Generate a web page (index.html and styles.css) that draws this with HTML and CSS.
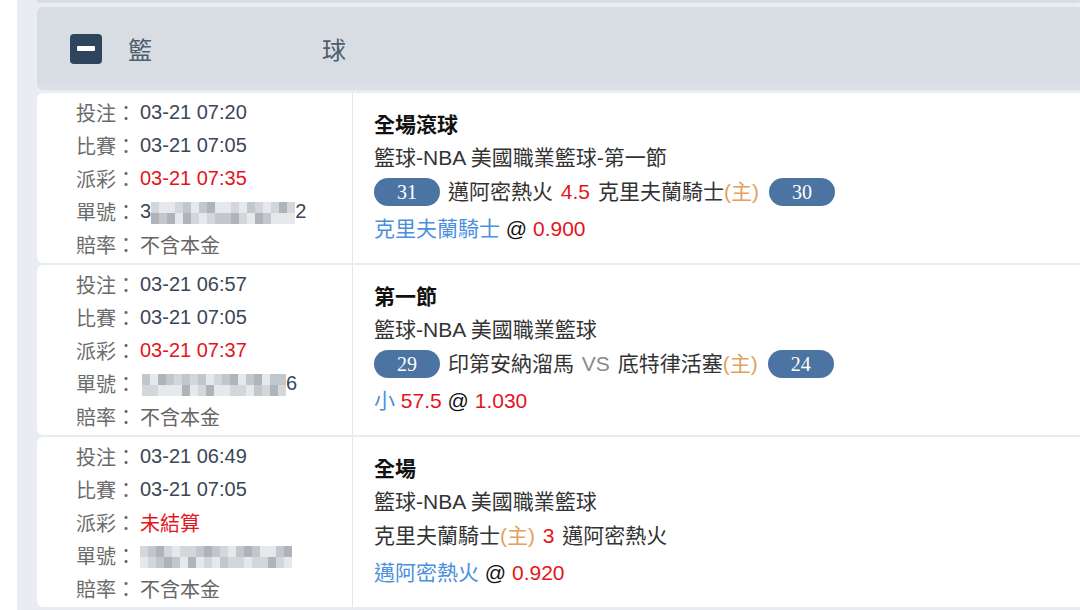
FILE: index.html
```html
<!DOCTYPE html>
<html lang="zh-Hant">
<head>
  <meta charset="UTF-8">
  <title>注單記錄</title>
  <link rel="stylesheet" href="styles.css">
</head>
<body>
  <div class="wrap">
    <div class="prev-bar"></div>

    <div class="sport-head">
      <span class="toggle"><span class="minus"></span></span>
      <span class="sport-name"><span>籃</span><span>球</span></span>
    </div>

    <div class="bet">
      <div class="meta">
        <div><span class="lbl">投注：</span><span class="val">03-21 07:20</span></div>
        <div><span class="lbl">比賽：</span><span class="val">03-21 07:05</span></div>
        <div><span class="lbl">派彩：</span><span class="val red">03-21 07:35</span></div>
        <div><span class="lbl">單號：</span><span class="val">3</span><span class="mosaic"><i class="g2"></i><i class="g4"></i><i class="g1"></i><i class="g3"></i><i class="g1"></i><i class="g4"></i><i class="g2"></i><i class="g1"></i><i class="g3"></i><i class="g4"></i><i class="g1"></i><i class="g2"></i><i class="g3"></i><i class="g1"></i><i class="g4"></i><i class="g2"></i><i class="g1"></i><i class="g3"></i><i class="g1"></i><i class="g3"></i><i class="g2"></i><i class="g4"></i><i class="g1"></i><i class="g2"></i><i class="g3"></i><i class="g1"></i><i class="g2"></i><i class="g4"></i><i class="g1"></i><i class="g3"></i><i class="g2"></i><i class="g1"></i><i class="g4"></i><i class="g1"></i><i class="g2"></i><i class="g1"></i></span><span class="val">2</span></div>
        <div><span class="lbl">賠率：</span><span class="val soft">不含本金</span></div>
      </div>
      <div class="detail">
        <div class="bet-type">全場滾球</div>
        <div class="league">籃球-NBA 美國職業籃球-第一節</div>
        <div class="teams"><span class="score">31</span>邁阿密熱火 <span class="red">4.5</span> 克里夫蘭騎士<span class="home">(主)</span><span class="score end">30</span></div>
        <div class="pick"><span class="blue">克里夫蘭騎士</span> @ <span class="red">0.900</span></div>
      </div>
    </div>

    <div class="bet">
      <div class="meta">
        <div><span class="lbl">投注：</span><span class="val">03-21 06:57</span></div>
        <div><span class="lbl">比賽：</span><span class="val">03-21 07:05</span></div>
        <div><span class="lbl">派彩：</span><span class="val red">03-21 07:37</span></div>
        <div><span class="lbl">單號：</span><span class="mosaic shift"><i class="g3"></i><i class="g2"></i><i class="g1"></i><i class="g2"></i><i class="g4"></i><i class="g1"></i><i class="g3"></i><i class="g1"></i><i class="g2"></i><i class="g1"></i><i class="g3"></i><i class="g4"></i><i class="g2"></i><i class="g1"></i><i class="g3"></i><i class="g2"></i><i class="g1"></i><i class="g4"></i><i class="g2"></i><i class="g1"></i><i class="g3"></i><i class="g1"></i><i class="g4"></i><i class="g2"></i><i class="g1"></i><i class="g2"></i><i class="g3"></i><i class="g1"></i><i class="g4"></i><i class="g3"></i><i class="g1"></i><i class="g2"></i><i class="g3"></i><i class="g4"></i><i class="g3"></i><i class="g2"></i></span><span class="val">6</span></div>
        <div><span class="lbl">賠率：</span><span class="val soft">不含本金</span></div>
      </div>
      <div class="detail">
        <div class="bet-type">第一節</div>
        <div class="league">籃球-NBA 美國職業籃球</div>
        <div class="teams"><span class="score">29</span>印第安納溜馬 <span class="vs">VS</span> 底特律活塞<span class="home">(主)</span><span class="score end">24</span></div>
        <div class="pick"><span class="blue">小</span> <span class="red">57.5</span> @ <span class="red">1.030</span></div>
      </div>
    </div>

    <div class="bet">
      <div class="meta">
        <div><span class="lbl">投注：</span><span class="val">03-21 06:49</span></div>
        <div><span class="lbl">比賽：</span><span class="val">03-21 07:05</span></div>
        <div><span class="lbl">派彩：</span><span class="val red">未結算</span></div>
        <div><span class="lbl">單號：</span><span class="mosaic"><i class="g2"></i><i class="g1"></i><i class="g3"></i><i class="g2"></i><i class="g4"></i><i class="g3"></i><i class="g2"></i><i class="g4"></i><i class="g1"></i><i class="g3"></i><i class="g2"></i><i class="g1"></i><i class="g2"></i><i class="g4"></i><i class="g3"></i><i class="g1"></i><i class="g4"></i><i class="g2"></i><i class="g3"></i><i class="g1"></i><i class="g2"></i><i class="g3"></i><i class="g1"></i><i class="g2"></i><i class="g3"></i><i class="g2"></i><i class="g4"></i><i class="g1"></i><i class="g3"></i><i class="g2"></i><i class="g1"></i><i class="g2"></i><i class="g1"></i><i class="g4"></i><i class="g3"></i><i class="g2"></i><i class="g4"></i><i class="g1"></i></span></div>
        <div><span class="lbl">賠率：</span><span class="val soft">不含本金</span></div>
      </div>
      <div class="detail">
        <div class="bet-type">全場</div>
        <div class="league">籃球-NBA 美國職業籃球</div>
        <div class="teams">克里夫蘭騎士<span class="home">(主)</span> <span class="red">3</span> 邁阿密熱火</div>
        <div class="pick"><span class="blue">邁阿密熱火</span> @ <span class="red">0.920</span></div>
      </div>
    </div>
  </div>
</body>
</html>
```

FILE: styles.css
```css
body { margin: 0; background: #fff; font-family: "Liberation Sans", "Noto Sans CJK TC", sans-serif; overflow: hidden; }
.wrap { margin-left: 17px; padding: 0 0 0 20px; background: #e9ecf0; height: 610px; }

.prev-bar { height: 3px; background: #d8dde4; border-radius: 0 0 6px 6px; }

.sport-head { display: flex; align-items: center; height: 83px; margin: 4px 0 3px; padding-left: 33px; background: linear-gradient(#d8dde4 88%, #dde1e6); border-radius: 6px 0 0 6px; }
.toggle { width: 32px; height: 30px; background: #2f455e; border-radius: 4px; display: flex; align-items: center; justify-content: center; }
.minus { width: 18px; height: 5px; background: #fff; border-radius: 1px; }
.sport-name { display: flex; justify-content: space-between; width: 218px; margin-left: 26px; font-size: 24px; color: #4e5e6e; }

.bet { display: flex; height: 170px; margin-top: 2px; background: #fff; border-radius: 6px 0 0 6px; }

.meta { width: 276px; padding: 3px 0 0 39px; font-size: 20px; border-right: 1px solid #e6e6e6; }
.meta > div { display: flex; align-items: center; height: 33px; }
.lbl { color: #6b6b6b; width: 64px; }
.val { color: #3b4757; }
.val.soft { color: #666; }
.red { color: #e4141b; }

.mosaic { display: grid; grid-template-rows: 11px 11px; grid-auto-flow: column; grid-auto-columns: 8px; margin-top: 3px; }
.mosaic.shift { margin-left: 2px; }
.mosaic i { display: block; }
.g1 { background: #e6e9ec; }
.g2 { background: #d3d7db; }
.g3 { background: #c2c7cc; }
.g4 { background: #aeb4ba; }

.detail { flex: 1; padding: 15px 0 0 21px; font-size: 21px; color: #222; }
.bet-type { font-weight: bold; line-height: 33px; color: #111; }
.league { line-height: 33px; color: #333; }
.teams { line-height: 36px; height: 36px; color: #333; word-spacing: 2px; }
.pick { line-height: 38px; color: #111; }
.score { display: inline-block; vertical-align: middle; width: 66px; height: 28px; line-height: 29px; margin: -3px 8px 0 0; text-align: center; background: #4c74a2; color: #fff; border-radius: 14px; font-family: "Liberation Serif", serif; font-size: 20px; word-spacing: 0; }
.score.end { margin: -3px 0 0 10px; }
.home { color: #e3a15e; }
.vs { color: #8a8a8a; }
.blue { color: #4a90dc; }
```
